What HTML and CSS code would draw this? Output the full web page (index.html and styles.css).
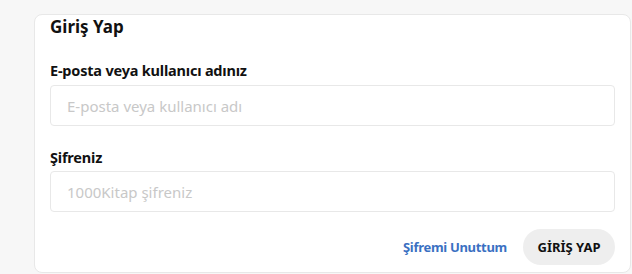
FILE: index.html
```html
<!DOCTYPE html>
<html lang="tr">
<head>
  <meta charset="UTF-8" />
  <meta name="viewport" content="width=device-width, initial-scale=1.0" />
  <title>Giriş Yap – 1000Kitap</title>
  <link rel="stylesheet" href="styles.css">
</head>
<body>
  <div class="card">
    <h2 class="card-title">Giriş Yap</h2>

    <label class="field-label" for="user">E-posta veya kullanıcı adınız</label>
    <input class="field" type="text" id="user" placeholder="E-posta veya kullanıcı adı" />

    <label class="field-label" for="pass">Şifreniz</label>
    <input class="field field-pass" type="password" id="pass" placeholder="1000Kitap şifreniz" />

    <div class="actions">
      <a class="forgot" href="#">Şifremi Unuttum</a>
      <button class="login-btn">GİRİŞ YAP</button>
    </div>
  </div>
</body>
</html>
```

FILE: styles.css
```css
:root {
  --page-bg: #f7f7f7;
  --card-bg: #ffffff;
  --border: #e8e8e8;
  --text: #111111;
  --link: #3a70c2;
  --placeholder: #c8c8c8;
}

body {
  margin: 0;
  padding: 14px 0 0 34px;
  font-family: 'Noto Sans', 'Open Sans', sans-serif;
  background-color: var(--page-bg);
  color: var(--text);
}

.card {
  width: 565px;
  padding: 0 15px 7px 15px;
  background: var(--card-bg);
  border: 1px solid var(--border);
  border-radius: 8px;
}

.card-title {
  margin: 0;
  font-size: 17px;
  line-height: 24px;
  font-weight: 700;
}

.field-label {
  display: block;
  margin-top: 21px;
  font-size: 14.5px;
  line-height: 20px;
  font-weight: 700;
  letter-spacing: -0.2px;
}

.field {
  display: block;
  box-sizing: border-box;
  width: 100%;
  height: 41px;
  margin-top: 5px;
  padding: 0 16px;
  font-family: inherit;
  font-size: 15px;
  color: var(--text);
  border: 1px solid var(--border);
  border-radius: 4px;
  background: #fff;
  outline: none;
}

.field::placeholder {
  color: var(--placeholder);
}

.field-pass {
  margin-top: 4px;
}

.actions {
  display: flex;
  justify-content: flex-end;
  align-items: center;
  gap: 16px;
  margin-top: 17px;
}

.forgot {
  color: var(--link);
  font-size: 13px;
  font-weight: 700;
  letter-spacing: -0.3px;
  text-decoration: none;
}

.login-btn {
  height: 36px;
  padding: 0 14.5px;
  font-family: inherit;
  font-size: 13px;
  font-weight: 700;
  color: var(--text);
  background-color: #eeeeee;
  border: none;
  border-radius: 18px;
  cursor: pointer;
}
```
